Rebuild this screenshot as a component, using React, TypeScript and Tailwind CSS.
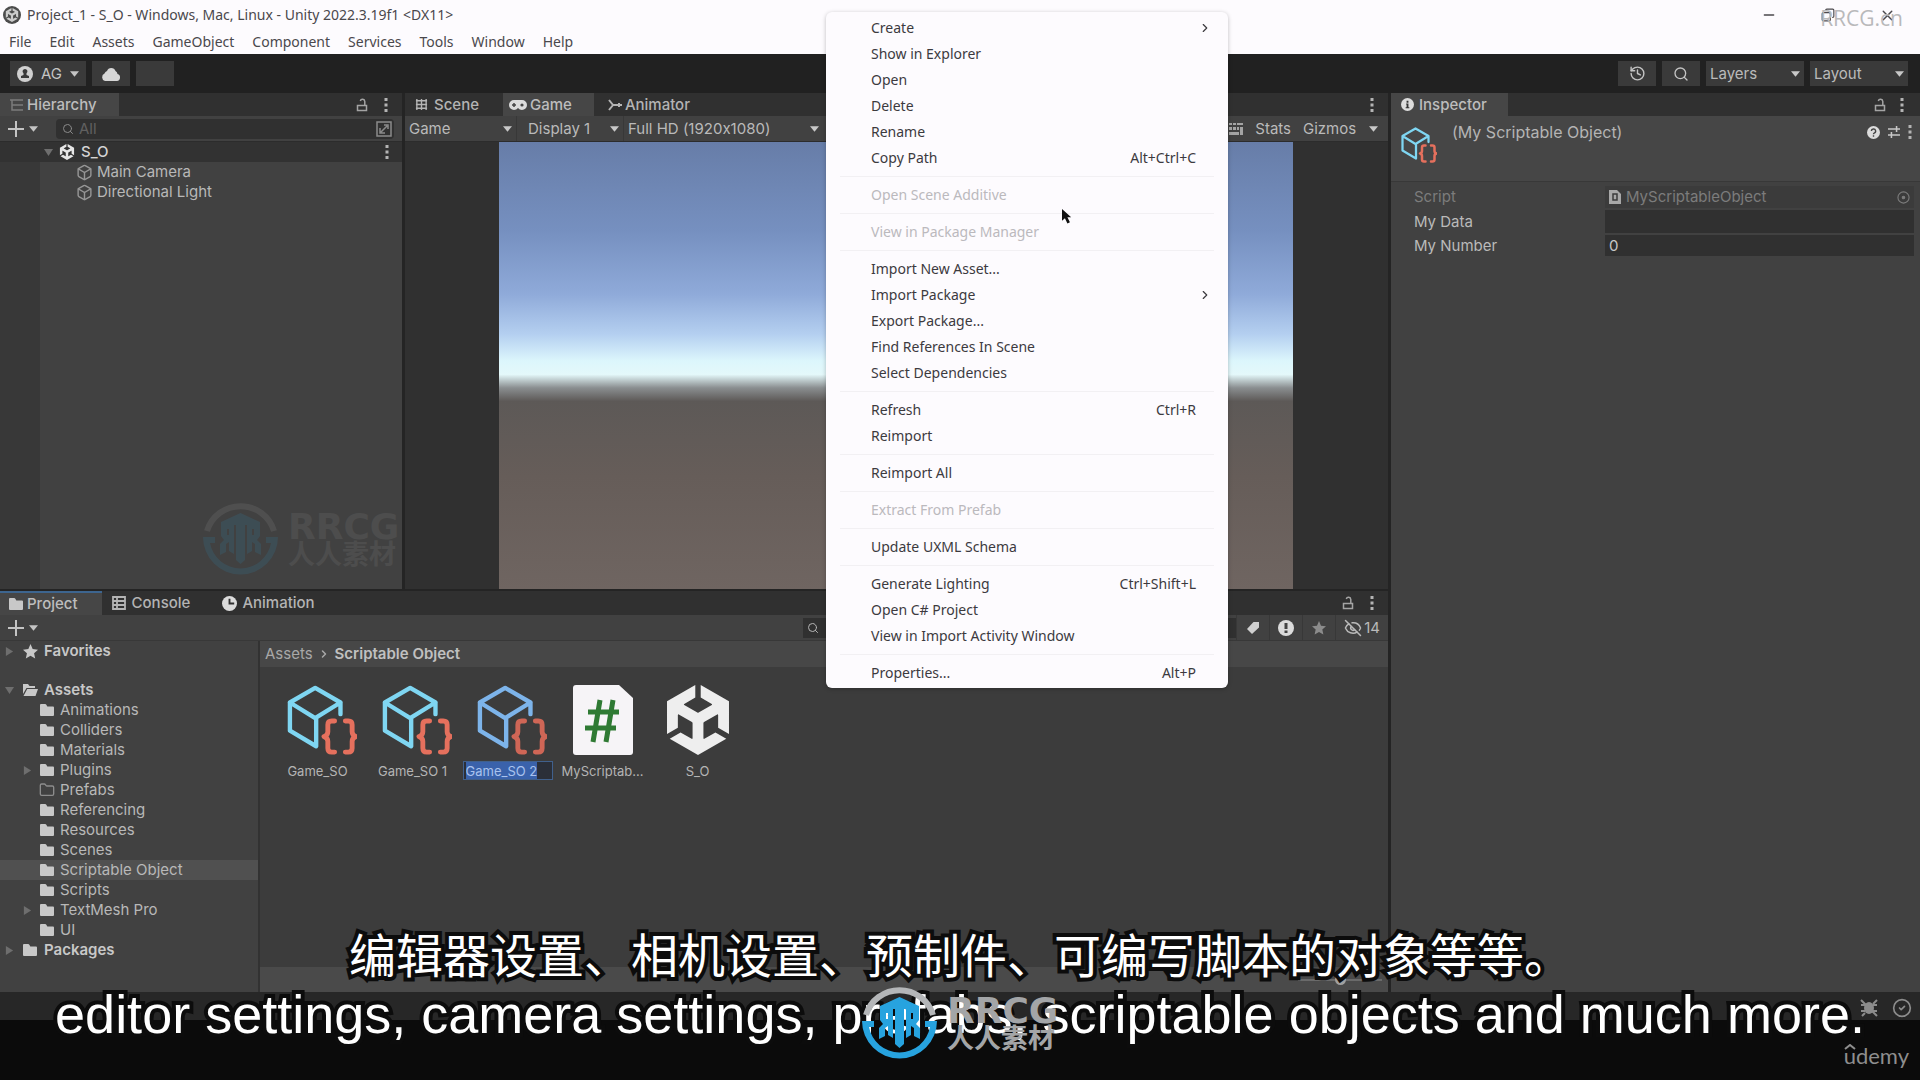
import { useEffect, useRef } from "react";
import type { ReactNode } from "react";
import {
  Box,
  ChevronRight,
  CircleCheck,
  Copy,
  EyeOff,
  Folder,
  History,
  Minus,
  Search,
  X,
} from "lucide-react";
import { SiUnity } from "react-icons/si";

const menuBar = ["File", "Edit", "Assets", "GameObject", "Component", "Services", "Tools", "Window", "Help"];

type MenuEntry = { label: string; shortcut?: string; submenu?: boolean; disabled?: boolean };

const contextMenu: MenuEntry[][] = [
  [
    { label: "Create", submenu: true },
    { label: "Show in Explorer" },
    { label: "Open" },
    { label: "Delete" },
    { label: "Rename" },
    { label: "Copy Path", shortcut: "Alt+Ctrl+C" },
  ],
  [{ label: "Open Scene Additive", disabled: true }],
  [{ label: "View in Package Manager", disabled: true }],
  [
    { label: "Import New Asset..." },
    { label: "Import Package", submenu: true },
    { label: "Export Package..." },
    { label: "Find References In Scene" },
    { label: "Select Dependencies" },
  ],
  [{ label: "Refresh", shortcut: "Ctrl+R" }, { label: "Reimport" }],
  [{ label: "Reimport All" }],
  [{ label: "Extract From Prefab", disabled: true }],
  [{ label: "Update UXML Schema" }],
  [
    { label: "Generate Lighting", shortcut: "Ctrl+Shift+L" },
    { label: "Open C# Project" },
    { label: "View in Import Activity Window" },
  ],
  [{ label: "Properties...", shortcut: "Alt+P" }],
];

const assetFolders = [
  { name: "Animations" },
  { name: "Colliders" },
  { name: "Materials" },
  { name: "Plugins", nested: true },
  { name: "Prefabs", empty: true },
  { name: "Referencing" },
  { name: "Resources" },
  { name: "Scenes" },
  { name: "Scriptable Object", selected: true },
  { name: "Scripts" },
  { name: "TextMesh Pro", nested: true },
  { name: "UI" },
];

/* ---------- icons ---------- */

function Caret({ className = "" }: { className?: string }) {
  return (
    <svg viewBox="0 0 10 6" className={`w-[9px] h-[6px] shrink-0 ${className}`} fill="currentColor" aria-hidden="true">
      <path d="M0 0h10L5 6z" />
    </svg>
  );
}

function Foldout({ open }: { open?: boolean }) {
  return (
    <svg viewBox="0 0 10 10" className="w-[9px] h-[9px] shrink-0 text-[#6e6e6e]" fill="currentColor" aria-hidden="true">
      <path d={open ? "M0 1h10L5 9z" : "M1 0v10l8-5z"} />
    </svg>
  );
}

function Kebab() {
  return (
    <svg viewBox="0 0 4 14" className="w-1 h-[14px] shrink-0 text-[#b4b4b4]" fill="currentColor" aria-hidden="true">
      <path d="M.5 0h3v3h-3zM.5 5.500h3v3h-3zM.5 11h3v3h-3z" />
    </svg>
  );
}

function Lock() {
  return (
    <svg viewBox="0 0 12 14" className="w-3 h-[14px] shrink-0 text-[#a4a4a4]" fill="none" stroke="currentColor" strokeWidth="1.500" aria-hidden="true">
      <path d="M1.500 7.500h9v5h-9zM8.800 7V3.500A2.300 2.300 0 0 0 4.300 3" />
    </svg>
  );
}

function FolderIcon({ open }: { open?: boolean }) {
  return (
    <svg viewBox="0 0 16 14" className="w-4 h-[14px] shrink-0 text-[#c8c8c8]" fill="currentColor" aria-hidden="true">
      {open ? (
        <path d="M1 1h5l1.500 2H13v2H4.500L1 11zM5.200 6H16l-2.500 7H1.500z" />
      ) : (
        <path d="M1 2q0-1 1-1h4q1 0 1.500 1l.8 1.500H14q1 0 1 1V12q0 1-1 1H2q-1 0-1-1z" />
      )}
    </svg>
  );
}

function ScriptableIcon({ tint = "#7fd6f2", brace = "#e5705d", small }: { tint?: string; brace?: string; small?: boolean }) {
  return (
    <svg viewBox="0 0 72 72" className={small ? "w-9 h-9" : "w-[70px] h-[70px] ml-[9px]"} fill="none" strokeLinejoin="round" strokeLinecap="round" aria-hidden="true">
      <path d="M55 30V18L29 3 3 18v29l27 16V34M3 18l26 16 26-16" stroke={tint} strokeWidth="4.500" />
      <path d="M49 37h-3q-4 0-4 4v7q0 4-4 5 4 1 4 5v7q0 4 4 4h3M60 37h3q4 0 4 4v7q0 4 4 5-4 1-4 5v7q0 4-4 4h-3" stroke={brace} strokeWidth="5" />
    </svg>
  );
}

function CsFileIcon() {
  return (
    <svg viewBox="0 0 60 70" className="w-[60px] h-[70px]" aria-hidden="true">
      <path d="M3 0h43l14 13v54q0 3-3 3H3q-3 0-3-3V3q0-3 3-3z" fill="#f6f4f7" />
      <path d="M27 15 20 57M40 15l-7 42M15 27h31M12 43h31" stroke="#2f7a34" strokeWidth="5" fill="none" />
    </svg>
  );
}

function RrcgLogo() {
  return (
    <svg viewBox="0 0 76 76" className="w-[76px] h-[76px] shrink-0" aria-hidden="true">
      <path d="M4 30A35 35 0 0 1 71 30" fill="none" stroke="#b4b6b8" strokeWidth="6" />
      <path d="M0 36h12v6H7a31 31 0 0 0 61 0h-5v-6h12A37 37 0 0 1 0 36z" fill="#27a3df" />
      {/* the shield roof with the stem of the T */}
      <path d="M37.500 12 57 21v4l-4-1H42v35l-4.500 4-4.500-4V24H22l-4 1v-4z" fill="#27a3df" />
      {/* the two mirrored halves */}
      <path d="M18 23h13v30l-5-3V41l-3 2v8l-6 3V43l4-4-3-4zM24 28v6h2v-6z" fill="#27a3df" fillRule="evenodd" />
      <path d="M57 23H44v30l5-3V41l3 2v8l6 3V43l-4-4 3-4zM51 28v6h-2v-6z" fill="#27a3df" fillRule="evenodd" />
    </svg>
  );
}

function Watermark() {
  return (
    <div className="flex items-center gap-[9px]">
      <RrcgLogo />
      <div className="flex flex-col text-[#a3a5a7]">
        <span className="font-['DejaVu_Sans',sans-serif] font-bold text-[36px] leading-[28px]">RRCG</span>
        <span className="font-['Noto_Sans_CJK_SC',sans-serif] font-bold text-[27px] leading-[24px]">人人素材</span>
      </div>
    </div>
  );
}

/* ---------- shared controls ---------- */

function Tab({ icon, label, active, className = "" }: { icon: ReactNode; label: string; active?: boolean; className?: string }) {
  return (
    <button
      role="tab"
      aria-selected={!!active}
      className={`h-full flex items-center gap-[3px] font-medium ${active ? "bg-[#464646] text-[#bdbdbd]" : "text-[#b4b4b4]"} ${className}`}
    >
      {icon}
      {label}
    </button>
  );
}

function Dropdown({ label, value, className = "" }: { label: string; value: string; className?: string }) {
  return (
    <div className={`relative shrink-0 h-[25px] ${className}`}>
      <select aria-label={label} defaultValue={value} className="appearance-none w-full h-full pl-1 pr-4 bg-transparent text-[#bababa] outline-none">
        <option>{value}</option>
      </select>
      <Caret className="absolute right-1 top-1/2 -translate-y-1/2 pointer-events-none text-[#c8c8c8]" />
    </div>
  );
}

function AddButton() {
  return (
    <button aria-label="Add" className="flex items-center gap-[5px] pl-2 text-[#c4c4c4]">
      <svg viewBox="0 0 16 16" className="w-4 h-4" stroke="currentColor" strokeWidth="2" aria-hidden="true">
        <path d="M8 0v16M0 8h16" />
      </svg>
      <Caret />
    </button>
  );
}

/* ---------- panels ---------- */

function TopBar() {
  const button = "h-[25px] bg-[#3a3a3a] text-[#c4c4c4] flex items-center justify-center";
  return (
    <div className="h-[39px] bg-[#212121] flex items-center justify-between pl-[10px] pr-3">
      <div className="flex gap-[6px]">
        <button className={`${button} w-[76px] gap-2`}>
          <svg viewBox="0 0 16 16" className="w-4 h-4" aria-hidden="true">
            <circle cx="8" cy="8" r="8" fill="#d0d0d0" />
            <path d="M8 3a2.400 2.400 0 0 1 1.500 4.300V9l2.500 1v2H4v-2l2.500-1V7.300A2.400 2.400 0 0 1 8 3z" fill="#3a3a3a" />
          </svg>
          AG
          <Caret />
        </button>
        <button aria-label="Cloud" className={`${button} w-[38px]`}>
          <svg viewBox="0 0 20 14" className="w-5 h-[14px]" fill="#d6d6d6" aria-hidden="true">
            <path d="M4 14a4 4 0 0 1-.5-7.500A4 4 0 0 1 6 4a4.500 4.500 0 0 1 8.500 0 4 4 0 0 1 2 3A3.600 3.600 0 0 1 16 14z" />
          </svg>
        </button>
        <button aria-label="Version control" className={`${button} w-[38px]`} />
      </div>
      <div className="flex gap-[6px]">
        <button aria-label="Undo history" className={`${button} w-[38px]`}>
          <History className="w-[17px] h-[17px]" />
        </button>
        <button aria-label="Search" className={`${button} w-[38px]`}>
          <Search className="w-4 h-4" />
        </button>
        <Dropdown label="Layers" value="Layers" className="w-[98px] bg-[#3a3a3a]" />
        <Dropdown label="Layout" value="Layout" className="w-[98px] bg-[#3a3a3a]" />
      </div>
    </div>
  );
}

function Hierarchy() {
  return (
    <section className="w-[402px] shrink-0 flex flex-col bg-[#414141]">
      <div className="h-[23px] bg-[#303030] flex items-center justify-between pr-[14px]">
        <Tab
          active
          label="Hierarchy"
          className="pl-[10px] pr-[22px]"
          icon={
            <svg viewBox="0 0 14 12" className="w-[14px] h-3 text-[#7c7c7c]" stroke="currentColor" strokeWidth="1.500" fill="none" aria-hidden="true">
              <path d="M0 1h13M5 6h8M5 11h8M2 1v10h3M2 6h3" />
            </svg>
          }
        />
        <div className="flex gap-4">
          <Lock />
          <Kebab />
        </div>
      </div>
      <div className="h-[26px] bg-[#414141] border-b border-[#2c2c2c] flex items-center pr-2">
        <AddButton />
        <label className="ml-[18px] flex-1 h-[20px] flex items-center gap-[5px] bg-[#303030] rounded-sm pl-[6px] pr-[2px] text-[#8a8a8a]">
          <Search className="w-3 h-3" />
          <input aria-label="Search hierarchy" placeholder="All" className="flex-1 min-w-0 bg-transparent outline-none placeholder:text-[#606060]" />
          <svg viewBox="0 0 16 16" className="w-4 h-4" fill="none" stroke="currentColor" strokeWidth="1.500" aria-hidden="true">
            <path d="M1 1h14v14H1zM4 12l7-7M8 4h4v4M4 7v5h5" />
          </svg>
        </label>
      </div>
      <div className="flex-1 bg-gradient-to-r from-[#383838] from-10% to-[#414141] to-10%">
        <div className="h-5 flex items-center pl-[44px] pr-[13px] bg-[#323232] text-[#d4d4d4] font-medium">
          <Foldout open />
          <SiUnity className="ml-[6px] mr-[6px] w-4 h-4 text-[#e6e6e6]" />
          <span className="flex-1">S_O</span>
          <Kebab />
        </div>
        {["Main Camera", "Directional Light"].map((name) => (
          <div key={name} className="h-5 flex items-center gap-1 pl-[76px] text-[#b8b8b8]">
            <Box className="w-[17px] h-[17px] text-[#969696]" />
            {name}
          </div>
        ))}
      </div>
    </section>
  );
}

function GameView() {
  return (
    <section className="flex-1 min-w-0 flex flex-col bg-[#303030]">
      <div className="h-[23px] flex items-center pr-[14px]">
        <Tab
          label="Scene"
          className="pl-[10px] pr-[24px]"
          icon={
            <svg viewBox="0 0 14 14" className="w-[13px] h-[13px] mr-[3px]" stroke="currentColor" strokeWidth="1.500" fill="none" aria-hidden="true">
              <path d="M2 1v12M7 1v12M12 1v12M1 3h12M1 7h12M1 11h12" />
            </svg>
          }
        />
        <Tab
          active
          label="Game"
          className="pl-[6px] pr-[22px]"
          icon={
            <svg viewBox="0 0 18 12" className="w-[18px] h-3 text-[#dcdcdc]" aria-hidden="true">
              <path d="M5 1h8a5 5 0 0 1 0 10q-2.500 0-4-2-1.500 2-4 2A5 5 0 0 1 5 1z" fill="currentColor" />
              <path d="M5 4v4M3 6h4" stroke="#464646" strokeWidth="1.500" />
              <circle cx="13" cy="6" r="1.600" fill="#464646" />
            </svg>
          }
        />
        <Tab
          label="Animator"
          className="pl-[14px] pr-3"
          icon={
            <svg viewBox="0 0 14 12" className="w-[14px] h-3" fill="none" stroke="currentColor" strokeWidth="2" aria-hidden="true">
              <path d="M1 1l4 5-4 5M5 6h9M11 4v4" />
            </svg>
          }
        />
        <span className="flex-1" />
        <Kebab />
      </div>
      <div className="h-[26px] bg-[#414141] border-b border-[#2c2c2c] flex items-center">
        <Dropdown label="View" value="Game" className="w-[112px] border-r border-[#383838]" />
        <Dropdown label="Display" value="Display 1" className="w-[107px] pl-[7px] border-r border-[#383838]" />
        <Dropdown label="Resolution" value="Full HD (1920x1080)" className="w-[199px]" />
        <span className="flex-1" />
        <svg viewBox="0 0 14 12" className="w-[14px] h-3 mr-3 text-[#a4a4a4]" fill="currentColor" aria-hidden="true">
          <path d="M0 0h3v2H0zM4 0h3v2H4zM8 0h6v2H8zM0 4h3v3H0zM4 4h3v3H4zM8 4h2v3H8zM11 4h3v8h-3zM0 9h10v3H0z" />
        </svg>
        <button className="text-[#bababa] mr-2">Stats</button>
        <Dropdown label="Gizmos" value="Gizmos" className="w-[83px] mr-[6px]" />
      </div>
      <div className="flex-1 flex pl-[94px] pr-[95px]">
        <div className="flex-1 bg-[linear-gradient(to_bottom,#677da8_0%,#7690c0_20%,#8faad9_34%,#b4cff0_43%,#dcf6fc_49%,#e4f8fa_52%,#8a8e90_55%,#5d5957_58%,#665d59_75%,#6f6561_100%)]" />
      </div>
    </section>
  );
}

function Inspector() {
  return (
    <section className="w-[529px] shrink-0 bg-[#414141]">
      <div className="h-[23px] bg-[#303030] flex items-center justify-between pr-4">
        <Tab
          active
          label="Inspector"
          className="pl-[10px] pr-[21px]"
          icon={
            <svg viewBox="0 0 14 14" className="w-[13px] h-[13px] mr-[2px]" aria-hidden="true">
              <circle cx="7" cy="7" r="7" fill="#dcdcdc" />
              <path d="M5.500 6H8v4h1v1H5v-1h1V7h-.5zM6 3h2v2H6z" fill="#333" />
            </svg>
          }
        />
        <div className="flex gap-[14px]">
          <Lock />
          <Kebab />
        </div>
      </div>
      <div className="h-[66px] bg-[#464646] border-b border-[#383838] flex items-start pl-[10px] pr-2 pt-[6px]">
        <div className="pt-[5px]">
          <ScriptableIcon small />
        </div>
        <h2 className="flex-1 pl-[15px] text-[#b4b4b4] text-[16px] leading-5">(My Scriptable Object)</h2>
        <div className="flex items-center gap-2 h-5 text-[#c8c8c8]">
          <svg viewBox="0 0 14 14" className="w-[13px] h-[13px]" aria-hidden="true">
            <circle cx="7" cy="7" r="7" fill="#dcdcdc" />
            <path d="M4.700 5.500a2.300 2.300 0 1 1 3 2.200q-.7.300-.7 1.300M7 10v1.500" stroke="#444" strokeWidth="1.500" fill="none" />
          </svg>
          <svg viewBox="0 0 14 14" className="w-3 h-3" fill="none" stroke="currentColor" strokeWidth="1.800" aria-hidden="true">
            <path d="M0 3.500h14M10 0v7M0 10.500h14M4 7v7" />
          </svg>
          <Kebab />
        </div>
      </div>
      <div className="grid grid-cols-[191px_1fr] gap-y-[2px] items-center pl-[23px] pr-[6px] pt-1">
        <label htmlFor="script" className="text-[#7c7c7c]">Script</label>
        <div className="h-[22px] flex items-center bg-[#3b3b3b] px-1 gap-[5px]">
          <svg viewBox="0 0 12 14" className="w-3 h-[14px]" aria-hidden="true">
            <path d="M0 0h8l4 4v10H0z" fill="#a8a8a8" />
            <path d="M4 4h4v6H4z" fill="none" stroke="#3b3b3b" strokeWidth="1.500" />
          </svg>
          <input id="script" readOnly value="MyScriptableObject" className="flex-1 min-w-0 bg-transparent text-[#7c7c7c] outline-none" />
          <svg viewBox="0 0 14 14" className="w-[13px] h-[13px]" fill="none" stroke="#7c7c7c" strokeWidth="1.200" aria-hidden="true">
            <circle cx="7" cy="7" r="6" />
            <circle cx="7" cy="7" r="1.300" fill="#7c7c7c" />
          </svg>
        </div>
        <label htmlFor="my-data" className="text-[#bababa]">My Data</label>
        <input id="my-data" className="h-[23px] bg-[#303030] px-1 text-[#c8c8c8] outline-none" />
        <label htmlFor="my-number" className="text-[#bababa]">My Number</label>
        <input id="my-number" defaultValue="0" className="h-[21px] bg-[#303030] px-1 text-[#c8c8c8] outline-none" />
      </div>
    </section>
  );
}

function ProjectTree() {
  return (
    <nav className="w-[260px] shrink-0 border-r-2 border-[#323232] bg-[#414141] pb-8 text-[#b8b8b8]">
      <div className="h-5 flex items-center pl-[5px] font-semibold text-[#c8c8c8]">
        <Foldout />
        <svg viewBox="0 0 16 16" className="w-[15px] h-[15px] ml-[9px] mr-[6px]" fill="currentColor" aria-hidden="true">
          <path d="M8 0l2.300 5.300L16 6l-4.200 3.800L13 15.500 8 12.500l-5 3 1.200-5.700L0 6l5.700-.7z" />
        </svg>
        Favorites
      </div>
      <div className="h-5 mt-[19px] flex items-center pl-[5px] font-semibold text-[#c8c8c8]">
        <Foldout open />
        <span className="ml-2 mr-[6px]">
          <FolderIcon open />
        </span>
        Assets
      </div>
      {assetFolders.map((folder) => (
        <div key={folder.name} className={`h-5 flex items-center pl-[23px] ${folder.selected ? "bg-[#505050]" : ""}`}>
          <span className="w-4">{folder.nested && <Foldout />}</span>
          {folder.empty ? <Folder className="w-4 h-4 text-[#8c8c8c]" /> : <FolderIcon />}
          <span className="pl-[5px]">{folder.name}</span>
        </div>
      ))}
      <div className="h-5 flex items-center pl-[5px] font-semibold text-[#c8c8c8]">
        <Foldout />
        <span className="ml-2 mr-[6px]">
          <FolderIcon />
        </span>
        Packages
      </div>
    </nav>
  );
}

function AssetItem({ icon, children }: { icon: ReactNode; children: ReactNode }) {
  return (
    <div className="w-[95px] flex flex-col items-center">
      {icon}
      <div className="mt-[6px] h-[19px] w-[90px] flex items-center justify-center text-[13px] text-[#b4b4b4]">{children}</div>
    </div>
  );
}

function Project() {
  const renameRef = useRef<HTMLInputElement>(null);

  // a freshly duplicated asset opens with its whole name selected
  useEffect(() => {
    renameRef.current?.focus();
    renameRef.current?.select();
  }, []);

  const tool = "h-full w-[33px] flex items-center justify-center border-l border-[#383838]";

  return (
    <section className="flex flex-col bg-[#414141] border-t-2 border-[#242424]">
      <div className="h-6 bg-[#303030] flex items-center pr-[14px]">
        <Tab active label="Project" icon={<FolderIcon />} className="pl-2 pr-[24px] border-t-2 border-[#3d658f]" />
        <Tab
          label="Console"
          className="pl-[10px] pr-[20px]"
          icon={
            <svg viewBox="0 0 14 14" className="w-[14px] h-[14px] mr-[3px]" stroke="currentColor" strokeWidth="1.800" fill="none" aria-hidden="true">
              <path d="M1 1h12v12H1zM1 5h12M1 9h12M5 1v12" />
            </svg>
          }
        />
        <Tab
          label="Animation"
          className="pl-[12px]"
          icon={
            <svg viewBox="0 0 16 16" className="w-[15px] h-[15px] mr-[2px]" aria-hidden="true">
              <circle cx="8" cy="8" r="8" fill="#dcdcdc" />
              <path d="M8 3v5h5" stroke="#303030" strokeWidth="2" fill="none" />
            </svg>
          }
        />
        <span className="flex-1" />
        <div className="flex gap-4">
          <Lock />
          <Kebab />
        </div>
      </div>
      <div className="h-[26px] border-b border-[#383838] flex items-center">
        <AddButton />
        <span className="flex-1" />
        <label className="w-[433px] h-5 flex items-center gap-1 pl-1 bg-[#303030] text-[#b4b4b4]">
          <Search className="w-3 h-3" />
          <input aria-label="Search project" className="flex-1 min-w-0 bg-transparent outline-none" />
        </label>
        <button aria-label="Labels" className={tool}>
          <svg viewBox="0 0 14 14" className="w-[14px] h-[14px]" fill="#d0d0d0" aria-hidden="true">
            <path d="M7.500 1H13v5.500L6 13 1 8z" />
          </svg>
        </button>
        <button aria-label="Alerts" className={tool}>
          <svg viewBox="0 0 16 16" className="w-4 h-4" aria-hidden="true">
            <circle cx="8" cy="8" r="8" fill="#dcdcdc" />
            <path d="M6.500 3h3v6h-3zM6.500 10.500h3V13h-3z" fill="#444" />
          </svg>
        </button>
        <button aria-label="Favorite" className={tool}>
          <svg viewBox="0 0 16 16" className="w-[14px] h-[14px]" fill="#8c8c8c" aria-hidden="true">
            <path d="M8 0l2.300 5.300L16 6l-4.200 3.800L13 15.500 8 12.500l-5 3 1.200-5.700L0 6l5.700-.7z" />
          </svg>
        </button>
        <button className="h-full flex items-center gap-[2px] border-l border-[#383838] pl-2 pr-2 text-[#bababa]">
          <EyeOff className="w-[18px] h-[18px]" />
          14
        </button>
      </div>
      <div className="flex">
        <ProjectTree />
        <div className="flex-1 min-w-0 flex flex-col bg-[#3c3c3c]">
          <div className="h-[26px] bg-[#474747] flex items-center gap-[5px] pl-[5px] text-[#a8a8a8]">
            Assets
            <ChevronRight className="w-3 h-3" strokeWidth={3} />
            <span className="font-semibold text-[#c0c0c0]">Scriptable Object</span>
          </div>
          <div className="flex-1 flex items-start pl-[10px] pt-[18px]">
            <AssetItem icon={<ScriptableIcon />}>Game_SO</AssetItem>
            <AssetItem icon={<ScriptableIcon />}>Game_SO 1</AssetItem>
            <AssetItem icon={<ScriptableIcon tint="#7db4ea" brace="#cf6656" />}>
              <input
                ref={renameRef}
                aria-label="Asset name"
                defaultValue="Game_SO 2"
                className="w-full h-[19px] px-[2px] bg-[#2b2f38] border border-[#40608c] text-[#a9c2ee] outline-none selection:bg-[#3a62ab] selection:text-[#a9c2ee]"
              />
            </AssetItem>
            <AssetItem icon={<CsFileIcon />}>MyScriptab...</AssetItem>
            <AssetItem icon={<SiUnity className="w-[70px] h-[70px] text-[#eeeeee]" />}>S_O</AssetItem>
          </div>
          <div className="h-[25px] bg-[#4a4a4a] flex items-center justify-end pr-[6px]">
            <input
              type="range"
              aria-label="Icon size"
              defaultValue={50}
              className="appearance-none w-[84px] h-[2px] bg-[#6a6a6a] [&::-webkit-slider-thumb]:appearance-none [&::-webkit-slider-thumb]:w-[11px] [&::-webkit-slider-thumb]:h-[11px] [&::-webkit-slider-thumb]:rounded-full [&::-webkit-slider-thumb]:bg-[#a0a0a0]"
            />
          </div>
        </div>
      </div>
    </section>
  );
}

function ContextMenu() {
  return (
    <div
      role="menu"
      className="absolute left-[826px] top-[12px] w-[402px] pt-[3px] pb-[2px] rounded-md bg-[#fdfbfe] shadow-[0_1px_4px_rgba(0,0,0,0.250)] font-['Noto_Sans','Open_Sans',sans-serif] text-[14px] text-[#3c3a3e]"
    >
      {contextMenu.map((group, index) => (
        <div key={index}>
          {index > 0 && <hr className="my-[5px] mx-[14px] border-t border-[#f2f0f3]" />}
          {group.map((item) => (
            <button
              key={item.label}
              role="menuitem"
              disabled={item.disabled}
              className="w-full h-[26px] flex items-center justify-between pl-[45px] pr-[32px] disabled:text-[#bbb9bd]"
            >
              {item.label}
              {item.shortcut && <span>{item.shortcut}</span>}
              {item.submenu && <ChevronRight className="w-[14px] h-[14px] -mr-4" />}
            </button>
          ))}
        </div>
      ))}
    </div>
  );
}

function Subtitles() {
  const outline =
    "text-white [paint-order:stroke_fill] [-webkit-text-stroke:8px_#0c0c0c] whitespace-nowrap text-center";
  return (
    <div className="absolute inset-x-0 bottom-[36px] flex flex-col items-center">
      <p className={`${outline} font-['Noto_Sans_CJK_SC',sans-serif] text-[47px] leading-[62px]`}>
        编辑器设置、相机设置、预制件、可编写脚本的对象等等。
      </p>
      <p className={`${outline} font-['Liberation_Sans',Arial,sans-serif] text-[54px] leading-[60px]`}>
        editor settings, camera settings, prefabs, scriptable objects and much more.
      </p>
    </div>
  );
}

export default function App() {
  return (
    <div className="relative min-h-screen flex flex-col overflow-hidden bg-[#0b0b0b] font-['Inter','Liberation_Sans',sans-serif] [font-feature-settings:'calt'_0] text-[15px] leading-5">
      <header className="bg-[#fdfbfe] font-['Noto_Sans','Open_Sans',sans-serif] text-[#4a484c] text-[14px]">
        <div className="h-[30px] flex items-center pl-[3px] pr-[24px]">
          <span className="w-[18px] h-[18px] rounded-full bg-[#4c4c4c] flex items-center justify-center">
            <SiUnity className="w-[14px] h-[14px] text-[#cccccc]" />
          </span>
          <h1 className="pl-[6px] flex-1">Project_1 - S_O - Windows, Mac, Linux - Unity 2022.3.19f1 &lt;DX11&gt;</h1>
          <div className="flex items-center gap-[44px]">
            <button aria-label="Minimize"><Minus className="w-4 h-4" /></button>
            <button aria-label="Restore"><Copy className="w-[14px] h-[14px] -scale-x-100" /></button>
            <button aria-label="Close"><X className="w-[17px] h-[17px]" /></button>
          </div>
        </div>
        <div className="h-6 flex items-center gap-[18px] pl-[9px]">
          {menuBar.map((item) => (
            <button key={item}>{item}</button>
          ))}
        </div>
      </header>

      <TopBar />

      <main className="flex-1 flex bg-[#242424] gap-[3px]">
        <div className="flex-1 min-w-0 flex flex-col">
          <div className="flex-1 flex gap-[3px]">
            <Hierarchy />
            <GameView />
          </div>
          <Project />
        </div>
        <Inspector />
      </main>

      <footer className="h-7 bg-[#272727] flex items-center justify-end gap-[14px] pr-[8px] pt-1 text-[#8c8c8c]">
        <svg viewBox="0 0 18 18" className="w-[18px] h-[18px]" fill="none" stroke="currentColor" strokeWidth="2" aria-hidden="true">
          <path d="M1 1l16 16M2 17l3-3M13 5l4-4" />
          <ellipse cx="9" cy="9" rx="5" ry="6" fill="currentColor" stroke="none" />
          <path d="M1 6h4M1 12h4M13 6h4M13 12h4" />
        </svg>
        <CircleCheck className="w-5 h-5" strokeWidth={2} />
      </footer>
      <div className="h-[60px] flex items-center justify-end pr-[11px] pt-[12px]">
        <span className="relative font-['Lato',sans-serif] text-[22px] leading-7 text-[#8e8e8e]">
          udemy
          <svg viewBox="0 0 12 6" className="absolute left-0 top-[2px] w-3 h-[6px]" fill="none" stroke="currentColor" strokeWidth="2" aria-hidden="true">
            <path d="M1 5l5-4 5 4" />
          </svg>
        </span>
      </div>

      <ContextMenu />

      <svg viewBox="0 0 12 18" className="absolute left-[1062px] top-[208px] w-[10px] h-[17px]" aria-hidden="true">
        <path d="M0 0v14l3.500-3 3 6.500 3-1.500-3-6H11z" fill="#111" />
      </svg>

      <Subtitles />

      <div className="absolute left-[862px] top-[985px]">
        <Watermark />
      </div>
      <div className="absolute left-[203px] top-[501px] opacity-12">
        <Watermark />
      </div>
      <span className="absolute right-[17px] top-[7px] font-['Open_Sans',sans-serif] text-[21px] leading-[22px] text-[#b9b9bb]">RRCG.cn</span>
    </div>
  );
}
